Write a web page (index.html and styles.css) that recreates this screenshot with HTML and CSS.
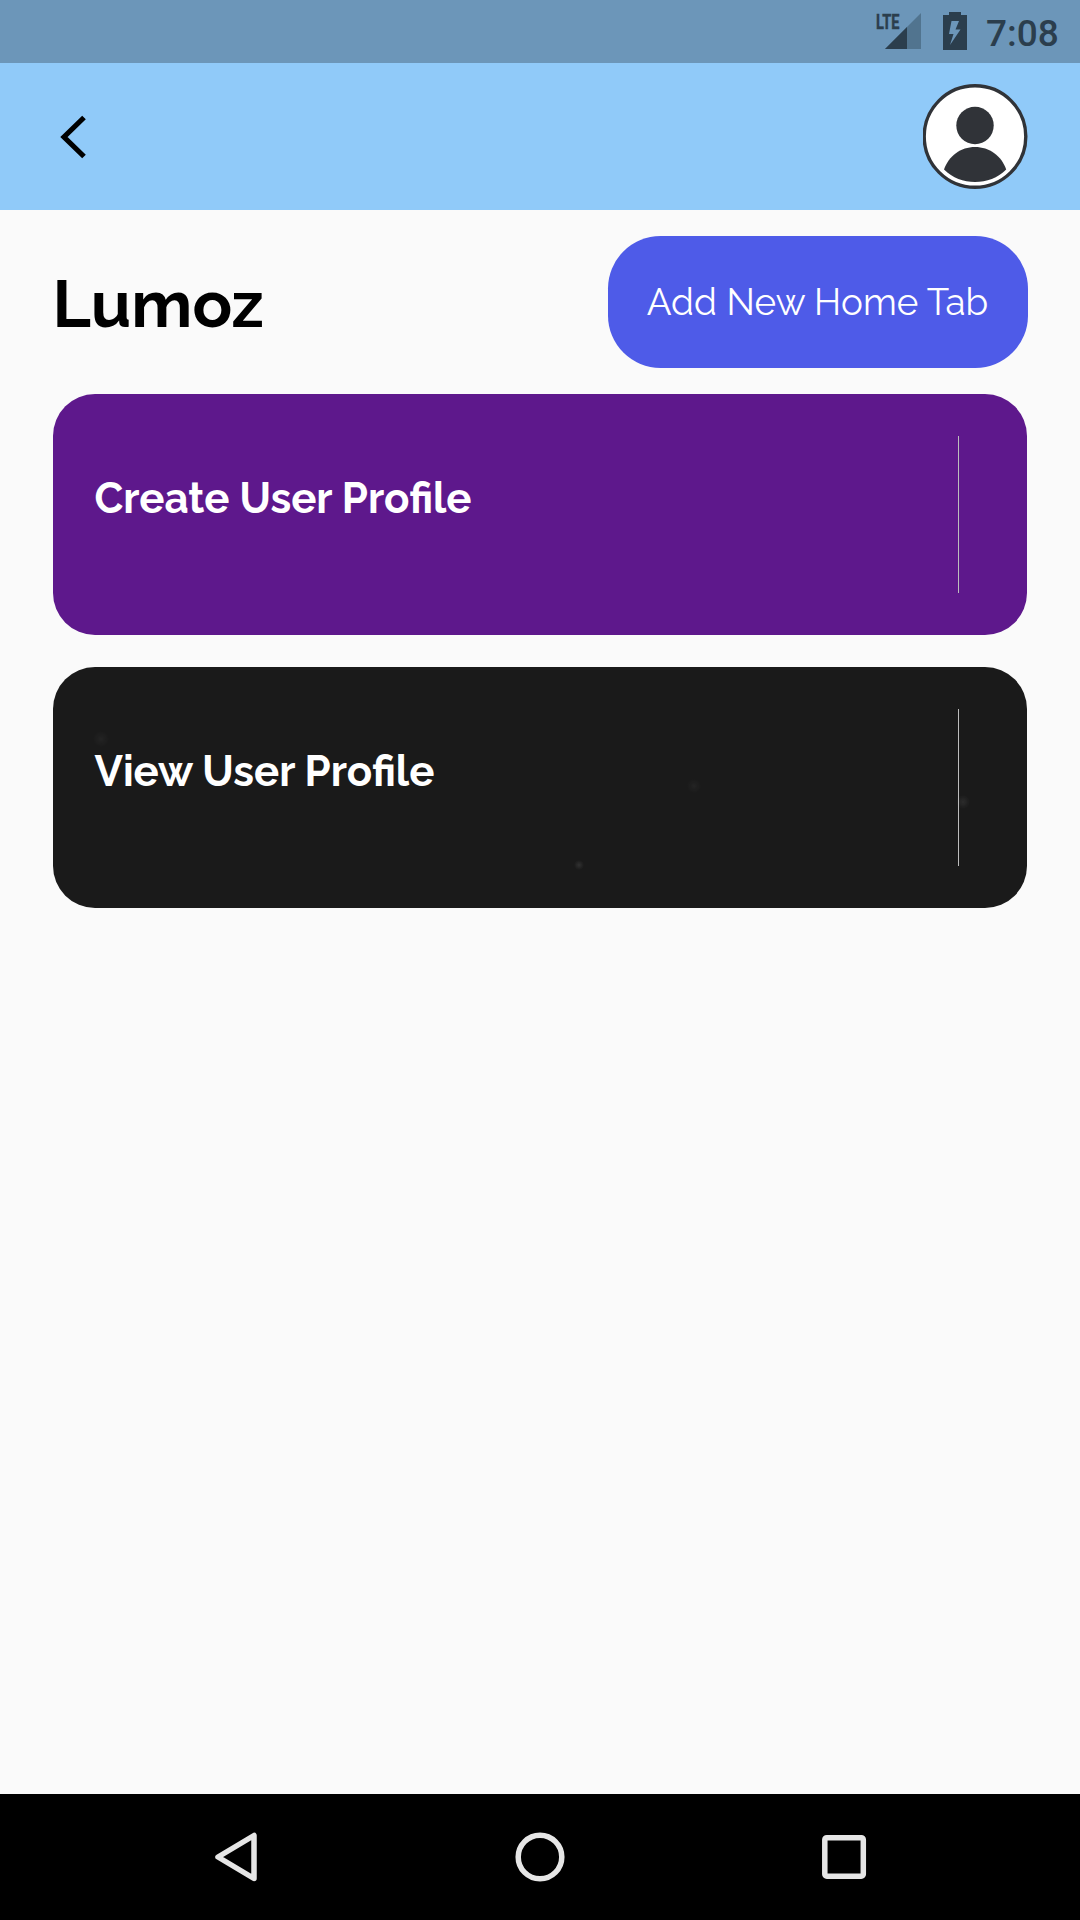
FILE: index.html
```html
<!DOCTYPE html>
<html lang="en">
<head>
<meta charset="utf-8">
<title>Lumoz</title>
<link rel="stylesheet" href="styles.css">
</head>
<body>
<div class="screen">
  <div class="status-bar">
    <svg class="status-signal" viewBox="0 0 46 38" aria-label="LTE signal">
      <path d="M9 37 45 1V37Z" fill="#51748f"/>
      <path d="M9 37 31 15V37Z" fill="#2b3e4d"/>
      <text class="lte" x="0" y="16.800" textLength="23.500" lengthAdjust="spacingAndGlyphs">LTE</text>
    </svg>
    <svg class="status-battery" viewBox="0 0 24 38" aria-label="Battery charging">
      <path fill-rule="evenodd" d="M6 0H18V3H24V38H0V3H6ZM8.500 9 6 22H10.500L7 33 17.500 17.500H12.500L16 9Z" fill="#2b3e4d"/>
    </svg>
    <span class="clock">7:08</span>
  </div>
  <header class="app-bar">
    <svg class="back" viewBox="0 0 27 44" aria-label="Back"><path d="M24 2.500 4 22 24 41.500" fill="none" stroke="#000" stroke-width="5.200"/></svg>
    <svg class="avatar" viewBox="0 0 105 105" aria-label="Profile">
      <circle cx="52" cy="52.500" r="50.800" fill="#fff" stroke="#303338" stroke-width="3.400"/>
      <circle cx="52" cy="41.500" r="18.700" fill="#303338"/>
      <path d="M21 85.500C25.700 72 37.700 63 52 63S78.700 72 83.200 85.500C74.700 94 63.700 98 52 98S29.700 94 21 85.500Z" fill="#303338"/>
    </svg>
  </header>
  <main class="content">
    <div class="heading">
      <h1 class="title">Lumoz</h1>
      <button class="add-tab"><span>Add New Home Tab</span></button>
    </div>
    <section class="card card-create">
      <h2 class="card-title">Create User Profile</h2>
      <div class="divider"></div>
    </section>
    <section class="card card-view">
      <h2 class="card-title">View User Profile</h2>
      <div class="divider"></div>
    </section>
  </main>
  <nav class="nav-bar">
    <svg class="nav-icon" viewBox="0 0 50 50" aria-label="Back"><path d="M43 3.500V46.500L7 25Z"/></svg>
    <svg class="nav-icon" viewBox="0 0 50 50" aria-label="Home"><circle cx="25" cy="25" r="21.800"/></svg>
    <svg class="nav-icon" viewBox="0 0 50 50" aria-label="Recent apps"><rect x="5.800" y="5.700" width="38.500" height="38.500" rx="2"/></svg>
  </nav>
</div>
</body>
</html>
```
FILE: styles.css
```css
* { box-sizing: border-box; }
body { margin: 0; font-family: Raleway, Lato, sans-serif; }
h1, h2 { margin: 0; }
svg { display: block; flex: none; }
.screen { width: 1080px; height: 1920px; display: flex; flex-direction: column; background: #fafafa; }
.status-bar { height: 63px; flex: none; background: #6c96b9; display: flex; align-items: flex-start; justify-content: flex-end; padding: 12px 22px 0 0; color: #2b3e4d; }
.status-signal { width: 46px; height: 38px; margin-right: 21px; overflow: visible; }
.lte { font: bold 21px Roboto, sans-serif; fill: #2b3e4d; stroke: #2b3e4d; stroke-width: 0.5px; }
.status-battery { width: 24px; height: 38px; margin-right: 19px; }
.clock { width: 72px; padding-top: 1px; font: 500 37px/42px Roboto, sans-serif; white-space: nowrap; }
.app-bar { height: 147px; flex: none; background: #90caf9; display: flex; align-items: center; justify-content: space-between; padding: 0 52px 0 60px; }
.back { width: 27px; height: 44px; }
.avatar { width: 105px; height: 105px; }
.content { flex: 1; padding: 26.250px 53px 0 52.500px; }
.heading { height: 131.250px; display: flex; align-items: center; justify-content: space-between; }
.title { font-size: 65.625px; font-weight: 700; line-height: 80px; padding-top: 5px; color: #000; }
.add-tab { width: 420px; height: 131.250px; margin-right: -0.500px; padding: 0; border: 0; border-radius: 52.500px; background: #4e5be8; color: #fff; font: 400 36.750px/46px Raleway, Lato, sans-serif; letter-spacing: 0.080px; white-space: nowrap; }
.card { height: 241.500px; border-radius: 42px; margin-top: 26.250px; padding: 42px 68.500px 42px 42px; display: flex; justify-content: space-between; color: #fff; }
.card-create { background: #5e188c; }
.card-view {
  margin-top: 31.500px;
  background:
    radial-gradient(circle at 526px 198px, #ffffff1a 0, #ffffff00 5px),
    radial-gradient(circle at 641px 119px, #ffffff0b 0, #ffffff00 7px),
    radial-gradient(circle at 910px 135px, #ffffff14 0, #ffffff00 7px),
    radial-gradient(circle at 48px 72px, #ffffff0b 0, #ffffff00 8px),
    #1a1a1a;
}
.card-title { font-size: 42px; line-height: 52px; font-weight: 700; padding-top: 37px; white-space: nowrap; }
.divider { width: 1px; height: 157.500px; background: #bdbdbd; }
.nav-bar { height: 126px; flex: none; background: #000; display: flex; align-items: center; justify-content: space-between; padding: 0 211px; }
.nav-icon { width: 50px; height: 50px; fill: none; stroke: #e6e6e6; stroke-width: 5.500px; stroke-linejoin: round; }
```
